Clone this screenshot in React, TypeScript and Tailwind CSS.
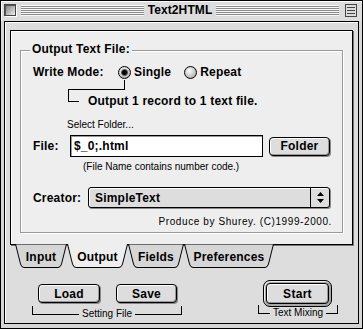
function Radio({ on }: { on?: boolean }) {
  return (
    <div className="w-[13px] h-[13px] rounded-full border border-black bg-[radial-gradient(circle_at_40%_35%,#ffffff,#9a9a9a)] flex items-center justify-center shrink-0">
      {on && <div className="w-[7px] h-[7px] rounded-full bg-black border border-[#555]" />}
    </div>
  )
}

function Button({ label, w }: { label: string; w: string }) {
  return (
    <div
      className={`${w} h-[19px] rounded-[4px] border border-black bg-[#dddddd] shadow-[inset_1px_1px_0_#ffffff,inset_-1px_-1px_0_#999999,1px_1px_0_#888888] flex items-center justify-center text-[12px] font-bold leading-none tracking-[0.2px]`}
    >
      {label}
    </div>
  )
}

function Tab({ label, w, active }: { label: string; w: number; active?: boolean }) {
  const h = 24
  const d = `M0.5,0 L${w - 0.5},0 L${w - 5.5},${h - 4} Q${w - 6.5},${h - 0.5} ${w - 9},${h - 0.5} L9,${h - 0.5} Q6.5,${h - 0.5} 5.5,${h - 4} Z`
  const sides = `M0.5,0 L5.5,${h - 4} Q6.5,${h - 0.5} 9,${h - 0.5} L${w - 9},${h - 0.5} Q${w - 6.5},${h - 0.5} ${w - 5.5},${h - 4} L${w - 0.5},0`
  return (
    <div className="relative h-[24px] flex items-center justify-center shrink-0" style={{ width: w }}>
      <svg className="absolute inset-0" width={w} height={h}>
        {active ? (
          <>
            <path d={d} fill="#eeeeee" />
            <path d={sides} fill="none" stroke="#000" />
          </>
        ) : (
          <path d={d} fill="#d6d6d6" stroke="#000" />
        )}
      </svg>
      <span className="relative text-[12px] font-bold leading-none tracking-[0.2px] pt-[2px]">{label}</span>
    </div>
  )
}

function TitleBar() {
  return (
    <div className="h-[20px] flex items-start pt-[3px] pl-[3px] pr-[5px] bg-[#dddddd] shadow-[inset_1px_1px_0_#ffffff]">
      <div className="w-[12px] h-[12px] border border-[#444] bg-[linear-gradient(135deg,#777,#eeeeee)] shadow-[inset_1px_1px_0_#555,1px_1px_0_#fff] shrink-0" />
      <div className="flex-1 h-[11px] ml-[5px] mt-[1px] bg-[repeating-linear-gradient(to_bottom,#f8f8f8_0px,#f8f8f8_1px,#8a8a8a_1px,#8a8a8a_2px)]" />
      <div className="px-[4px] text-[12px] font-bold leading-[13px] tracking-[0.1px]">Text2HTML</div>
      <div className="flex-1 h-[11px] mr-[6px] mt-[1px] bg-[repeating-linear-gradient(to_bottom,#f8f8f8_0px,#f8f8f8_1px,#8a8a8a_1px,#8a8a8a_2px)]" />
      <div className="w-[12px] h-[13px] border border-[#444] bg-[#dddddd] flex flex-col justify-center gap-[2px] px-[1px] shrink-0">
        <div className="h-px bg-[#444]" />
        <div className="h-px bg-[#444]" />
        <div className="h-px bg-[#444]" />
      </div>
    </div>
  )
}

function OutputPanel() {
  return (
    <div className="w-[343px] h-[215px] border border-black bg-[#eeeeee] shadow-[inset_1px_1px_0_#ffffff,1px_1px_0_#777777] pt-[19px] px-[9px]">
      <div className="relative h-[183px] border border-[#999999] shadow-[1px_1px_0_#ffffff,inset_1px_1px_0_#ffffff]">
        <div className="absolute top-[-9px] left-[9px] px-[2px] bg-[#eeeeee] text-[12px] font-bold leading-[15px] tracking-[0.2px]">
          Output Text File:
        </div>

        {/* write mode */}
        <div className="mt-[13px] h-[16px] flex items-center pl-[12px] text-[12px] font-bold tracking-[0.2px]">
          <div className="w-[85px]">Write Mode:</div>
          <Radio on />
          <span className="ml-[3px]">Single</span>
          <div className="ml-[13px]">
            <Radio />
          </div>
          <span className="ml-[3px]">Repeat</span>
        </div>
        <div className="ml-[47px] w-[57px] h-[10px] border-r border-b border-black" />
        <div className="flex items-start">
          <div className="ml-[47px] w-[11px] h-[12px] border-l border-b border-black" />
          <div className="ml-[9px] mt-[3px] text-[12px] font-bold leading-[16px] tracking-[0.2px]">
            Output 1 record to 1 text file.
          </div>
        </div>

        <div className="mt-[10px] pl-[46px] text-[10px] leading-[12px]">Select Folder...</div>

        {/* file */}
        <div className="mt-[4px] h-[22px] flex items-center pl-[12px] text-[12px] font-bold tracking-[0.2px]">
          <div className="w-[37px]">File:</div>
          <div className="w-[193px] h-[22px] border border-black bg-white shadow-[inset_1px_1px_0_#999999] pl-[3px] flex items-center">
            $_0;.html
          </div>
          <div className="ml-[6px]">
            <Button label="Folder" w="w-[61px]" />
          </div>
        </div>

        <div className="mt-[4px] pl-[62px] text-[10px] leading-[12px]">(File Name contains number code.)</div>

        {/* creator */}
        <div className="mt-[14px] h-[21px] flex items-center pl-[12px] text-[12px] font-bold tracking-[0.2px]">
          <div className="w-[55px]">Creator:</div>
          <div className="w-[242px] h-[21px] rounded-[3px] border border-black bg-[#dddddd] shadow-[inset_1px_1px_0_#ffffff,1px_1px_0_#888888] flex items-center">
            <div className="flex-1 pl-[6px]">SimpleText</div>
            <div className="w-[19px] h-full border-l border-black flex items-center justify-center">
              <svg width="7" height="11" viewBox="0 0 7 11">
                <path d="M3.5 0 L7 4 L0 4 Z M0 7 L7 7 L3.5 11 Z" fill="#000" />
              </svg>
            </div>
          </div>
        </div>

        <div className="mt-[8px] pr-[10px] text-right text-[10px] leading-[12px] tracking-[0.6px]">
          Produce by Shurey. (C)1999-2000.
        </div>
      </div>
    </div>
  )
}

export default function App() {
  return (
    <div className="w-[363px] h-[329px] bg-[#dddddd] font-['Liberation_Sans',Arial,sans-serif] text-black select-none">
      <div className="w-full h-full border border-black flex flex-col bg-[#d6d6d6]">
        <TitleBar />
        <div className="flex-1 px-[3px] pb-[4px]">
          <div className="h-full border border-black bg-[#dddddd] shadow-[inset_1px_1px_0_#ffffff] pt-[8px] pl-[5px]">
            <OutputPanel />

            {/* tabs */}
            <div className="flex ml-[5px] mt-[-1px] relative">
              <Tab label="Input" w={52} />
              <Tab label="Output" w={61} active />
              <Tab label="Fields" w={56} />
              <Tab label="Preferences" w={90} />
            </div>

            {/* bottom buttons */}
            <div className="flex items-start">
              <div className="ml-[22px] w-[150px] flex flex-col">
                <div className="mt-[16px] flex">
                  <div className="ml-[6px]">
                    <Button label="Load" w="w-[62px]" />
                  </div>
                  <div className="ml-[16px]">
                    <Button label="Save" w="w-[61px]" />
                  </div>
                </div>
                <div className="relative mt-[3px] h-[9px] border-l border-r border-b border-black">
                  <span className="absolute top-[2px] left-1/2 -translate-x-1/2 px-[3px] bg-[#dddddd] text-[10px] leading-[12px] whitespace-nowrap">
                    Setting File
                  </span>
                </div>
              </div>

              <div className="ml-[76px] w-[80px] flex flex-col">
                <div className="ml-[5px] mt-[12px] w-[69px] h-[27px] rounded-[7px] border border-black bg-[#a8a8a8] p-[2px] shadow-[inset_1px_1px_0_#eeeeee]">
                  <div className="h-full rounded-[4px] border border-black bg-[#dddddd] shadow-[inset_1px_1px_0_#ffffff,inset_-1px_-1px_0_#999999] flex items-center justify-center text-[12px] font-bold leading-none tracking-[0.3px]">
                    Start
                  </div>
                </div>
                <div className="relative mt-[-2px] h-[9px] border-l border-r border-b border-black">
                  <span className="absolute top-[2px] left-1/2 -translate-x-1/2 px-[3px] bg-[#dddddd] text-[10px] leading-[12px] whitespace-nowrap">
                    Text Mixing
                  </span>
                </div>
              </div>
            </div>
          </div>
        </div>
      </div>
    </div>
  )
}
